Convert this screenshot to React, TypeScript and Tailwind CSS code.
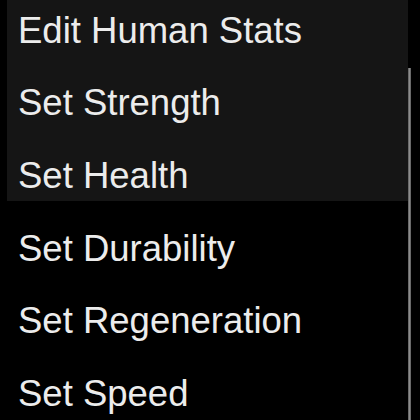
const highlighted = ["Edit Human Stats", "Set Strength", "Set Health"];
const rest = ["Set Durability", "Set Regeneration", "Set Speed"];

function Item({ label }: { label: string }) {
  return (
    <div className="h-[72.5px] shrink-0 pt-[10.5px] pl-[11px] text-[36.5px] leading-[40px] text-[#ececec] whitespace-nowrap">
      {label}
    </div>
  );
}

export default function App() {
  return (
    <div className="w-[420px] h-[420px] overflow-hidden bg-black flex font-['Liberation_Sans',Arial,sans-serif]">
      <div className="w-[408px] shrink-0 flex flex-col">
        <div className="ml-[7px] h-[201px] shrink-0 overflow-hidden bg-[#151515] flex flex-col">
          {highlighted.map((l) => (
            <Item key={l} label={l} />
          ))}
        </div>
        <div className="ml-[7px] pt-[17px] shrink-0 flex flex-col">
          {rest.map((l) => (
            <Item key={l} label={l} />
          ))}
        </div>
      </div>
      {/* scrollbar */}
      <div className="w-[3px] shrink-0 pt-[68px] flex flex-col">
        <div className="flex-1 bg-[#8c8c8c] border-x border-[#6a6a6a]" />
      </div>
    </div>
  );
}
